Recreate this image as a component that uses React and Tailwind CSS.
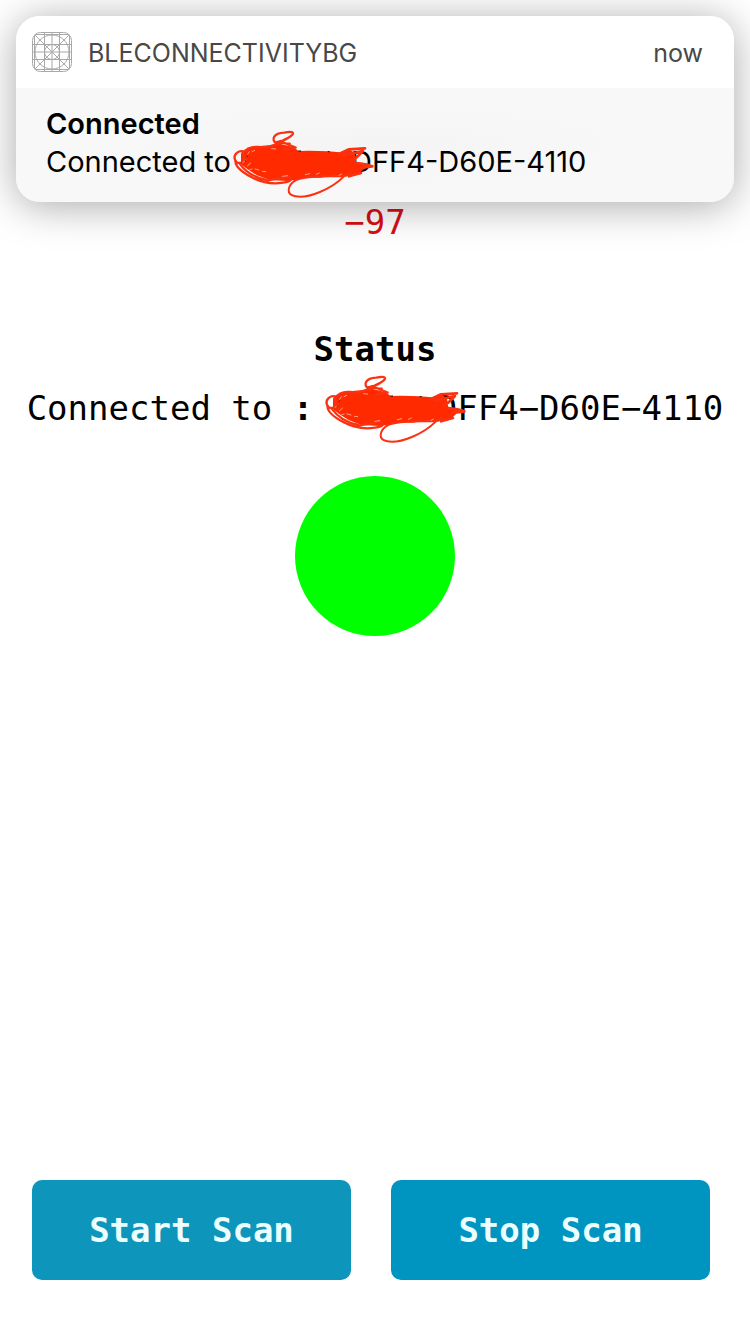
function GridIcon() {
  return (
    <svg viewBox="0 0 40 40" className="size-10 shrink-0" fill="none" stroke="#a9a9a9" strokeWidth="1" aria-hidden="true">
      <rect x="0.5" y="0.5" width="39" height="39" rx="8" />
      <path d="M2.5 3v34M12.5 0v40M20 0v40M27.5 0v40M37.5 3v34M3 2.5h34M0 12.5h40M0 20h40M0 27.5h40M3 37.5h34" />
      <path d="M3 3l34 34M37 3L3 37" />
      <circle cx="20" cy="20" r="17" />
      <circle cx="20" cy="20" r="7.5" />
    </svg>
  );
}

function Scribble() {
  return (
    <svg viewBox="0 0 426 201" className="pointer-events-none absolute -top-3 left-0 h-[67px] w-[142px] overflow-visible" aria-hidden="true">
      <path
        fill="#ff2a00"
        d="M24 70 38 56 57 48 88 44 122 42 140 38 168 45 188 53 197 60 230 59 285 61 320 64 348 55 366 66 368 84 370 94 392 96 410 99 420 106 396 112 384 122 370 130 350 136 320 134 290 135 262 140 215 139 190 146 164 150 110 147 72 133 46 116 24 100Z"
      />
      <g fill="none" stroke="#fb3212" strokeWidth="7" strokeLinecap="round" strokeLinejoin="round">
        <path d="M34 62C16 56 2 70 5 83S17 98 27 94 32 76 29 66" />
        <path d="M8 90C6 105 28 124 56 139S118 160 150 155 174 143 168 136L105 148M20 98Q48 137 100 147" />
        <path d="M28 68Q46 44 76 48T138 35L170 38M142 30Q160 39 188 50L150 55" />
        <path d="M131 38C112 27 122 6 154 5 182-1 190 7 166 20 153 29 142 32 127 34" />
      </g>
      <g fill="none" stroke="#fb3212" strokeWidth="8" strokeLinecap="round" strokeLinejoin="round">
        <path d="M320 68 348 55 396 52M332 73 390 60 372 78 356 88M370 96 392 99 418 106 385 110" />
        <path d="M348 136 384 126" />
      </g>
      <path
        d="M352 124 333 136C295 174 227 203 187 196 158 191 164 166 183 151 210 133 278 138 340 134"
        fill="none"
        stroke="#fb3212"
        strokeWidth="6"
        strokeLinecap="round"
      />
      <g fill="none" stroke="#ffd9d0" strokeWidth="2" strokeLinecap="round">
        <path d="M44 70l5-8M57 62l8-4M31 94l6-7M43 105l10-9M50 116l7-2M66 114l12 3M88 121l10 1M116 53l12 1M149 136l15-2M217 131l13-3M250 130l9-4M318 133l8-4" />
      </g>
      <g fill="none" stroke="#111" strokeWidth="3">
        <path d="M36 88l1 3M42 77l2-3M196 60h8M284 62h6" />
      </g>
    </svg>
  );
}

function Notification() {
  return (
    <section
      aria-label="Notification"
      className="absolute inset-x-4 top-4 overflow-hidden rounded-3xl bg-[#f8f8f8] font-['Inter',sans-serif] shadow-[0_4px_40px_rgba(0,0,0,0.34)]"
    >
      <header className="flex h-[72px] items-center gap-4 bg-white px-4 text-[25px] text-[#484848]">
        <GridIcon />
        <span className="grow pt-0.5 leading-8">BLECONNECTIVITYBG</span>
        <time className="pt-0.5 pr-[15px] leading-8">now</time>
      </header>
      <div className="bg-radial from-[#f4f4f4] to-[#f8f8f8] to-50% px-[30px] pt-[17px] pb-[21px] text-[29px] leading-[38px] text-black">
        <h2 className="font-semibold">Connected</h2>
        <p className="flex whitespace-nowrap">
          <span>Connected to</span>
          <span className="relative ml-0.5 flex w-[139px] justify-end">
            <span>D</span>
            <Scribble />
          </span>
          <span>FF4-D60E-4110</span>
        </p>
      </div>
    </section>
  );
}

export default function App() {
  return (
    <div className="relative flex min-h-screen flex-col bg-white font-['DejaVu_Sans_Mono',monospace] text-[34px] leading-10 text-black">
      <main className="flex grow flex-col items-center pt-[202px]">
        <p className="text-[#d60f14]">−97</p>
        <h1 className="mt-[87px] font-bold">Status</h1>
        <p className="mt-[19px] flex whitespace-nowrap">
          <span className="whitespace-pre">Connected to <b>:</b></span>
          <span className="relative ml-3 flex w-[132px] justify-end">
            <span>D</span>
            <Scribble />
          </span>
          <span>FF4−D60E−4110</span>
        </p>
        <div role="img" aria-label="Connected indicator" className="mt-12 size-40 rounded-full bg-[#00ff00]" />
      </main>
      <footer className="flex gap-10 pr-10 pb-[54px] pl-8 font-bold text-[#ebffff]">
        <button type="button" className="h-[100px] flex-1 rounded-[10px] bg-[#0e95bb]">Start Scan</button>
        <button type="button" className="h-[100px] flex-1 rounded-[10px] bg-[#0095c0]">Stop Scan</button>
      </footer>
      <Notification />
    </div>
  );
}
